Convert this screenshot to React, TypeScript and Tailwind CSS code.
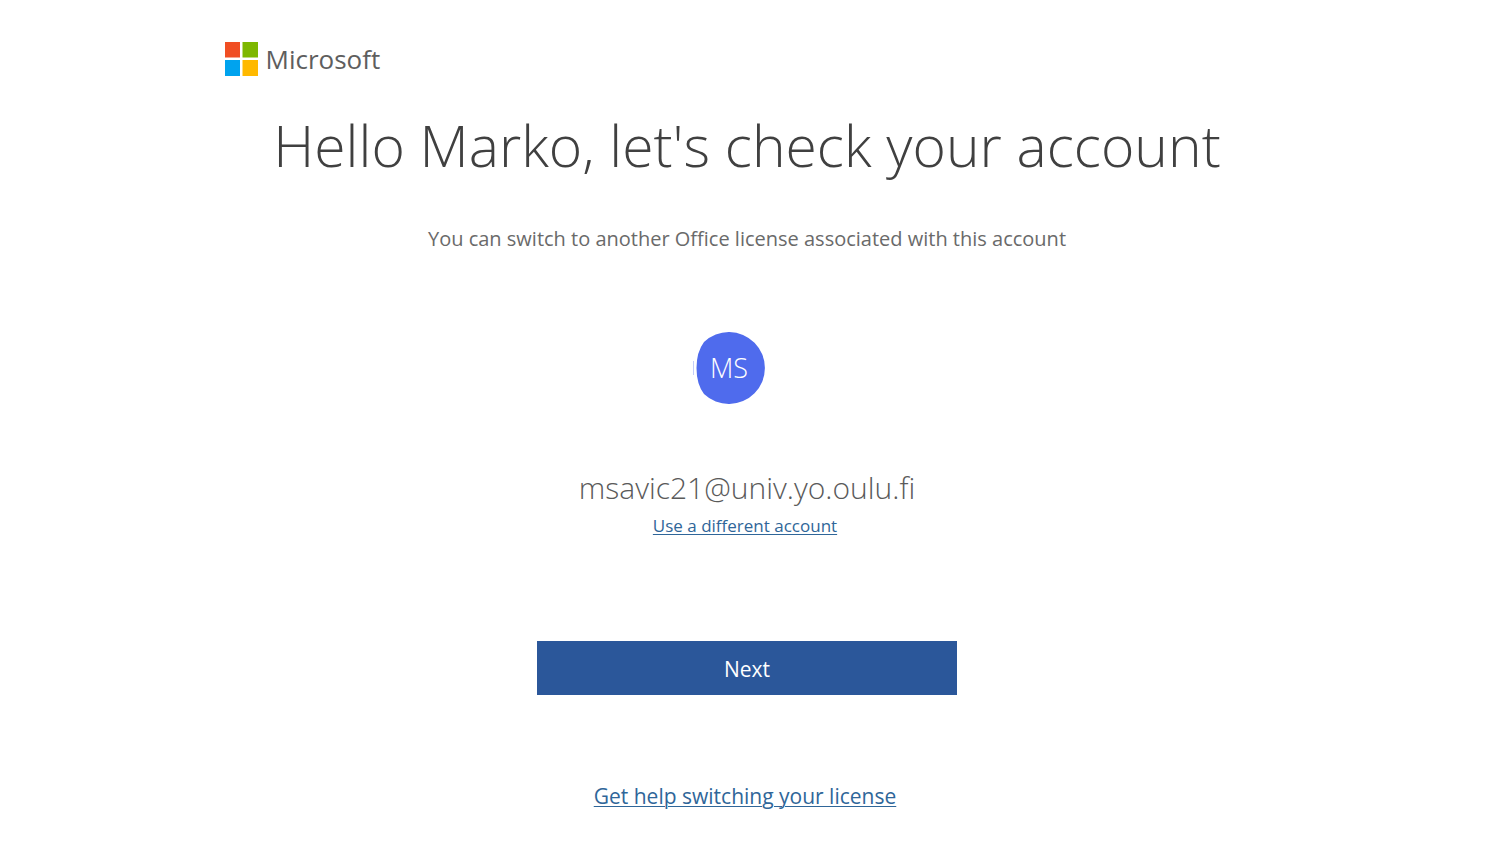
import React from "react";

function MicrosoftLogo() {
  return (
    <div className="flex items-center gap-2">
      <svg width="33" height="34" viewBox="0 0 33 34" aria-hidden="true">
        <rect x="0" y="0" width="15" height="15.5" fill="#f04e23" />
        <rect x="17.5" y="0" width="15.5" height="15.5" fill="#7db700" />
        <rect x="0" y="18" width="15" height="16" fill="#00a3ee" />
        <rect x="17.5" y="18" width="15.5" height="16" fill="#ffb900" />
      </svg>
      <span className="pb-px text-[26px] leading-[32px] font-medium text-[#5e5e5e]">Microsoft</span>
    </div>
  );
}

function Avatar() {
  return (
    <svg width="72" height="72" viewBox="0 0 72 72" role="img" aria-label="MS">
      <path d="M11 10A36 36 0 1 1 11 62Q3.5 52 3.5 36Q3.5 20 11 10Z" fill="#4f6bed" />
      <path d="M0.5 29V43" stroke="#c3cdf9" strokeWidth="1" />
      <text
        x="36"
        y="46"
        textAnchor="middle"
        fontSize="27"
        fontFamily="Open Sans, sans-serif"
        fontWeight="300"
        fill="#ffffff"
      >
        MS
      </text>
    </svg>
  );
}

const linkClass = "mr-1 text-[#2f6699] underline decoration-1 underline-offset-2";

export default function App() {
  return (
    <main className="min-h-screen bg-white font-['Open_Sans',sans-serif] text-[#666666]">
      <header className="px-[15%] pt-[42px]">
        <MicrosoftLogo />
      </header>
      <div className="flex flex-col items-center pr-[3px]">
        <h1 className="mt-[29px] text-center text-[57px] leading-[80px] font-light text-[#404040]">
          Hello Marko, let's check your account
        </h1>
        <p className="mt-[39px] text-center text-[20px] leading-[30px] text-[#6a6a6a]">
          You can switch to another Office license associated with this account
        </p>
        <div className="mt-[78px] pr-[36px]">
          <Avatar />
        </div>
        <p className="mt-[64px] text-[30px] leading-[40px] font-light text-[#5a5a5a]">msavic21@univ.yo.oulu.fi</p>
        <a href="#" className={`mt-[6px] text-[17px] leading-[24px] ${linkClass}`}>
          Use a different account
        </a>
        <button type="button" className="mt-[103px] h-[54px] w-[420px] max-w-full bg-[#2b579a] pt-1 text-[21px] text-white">
          Next
        </button>
        <a href="#" className={`mt-[86px] text-[21px] leading-[30px] ${linkClass}`}>
          Get help switching your license
        </a>
      </div>
    </main>
  );
}
